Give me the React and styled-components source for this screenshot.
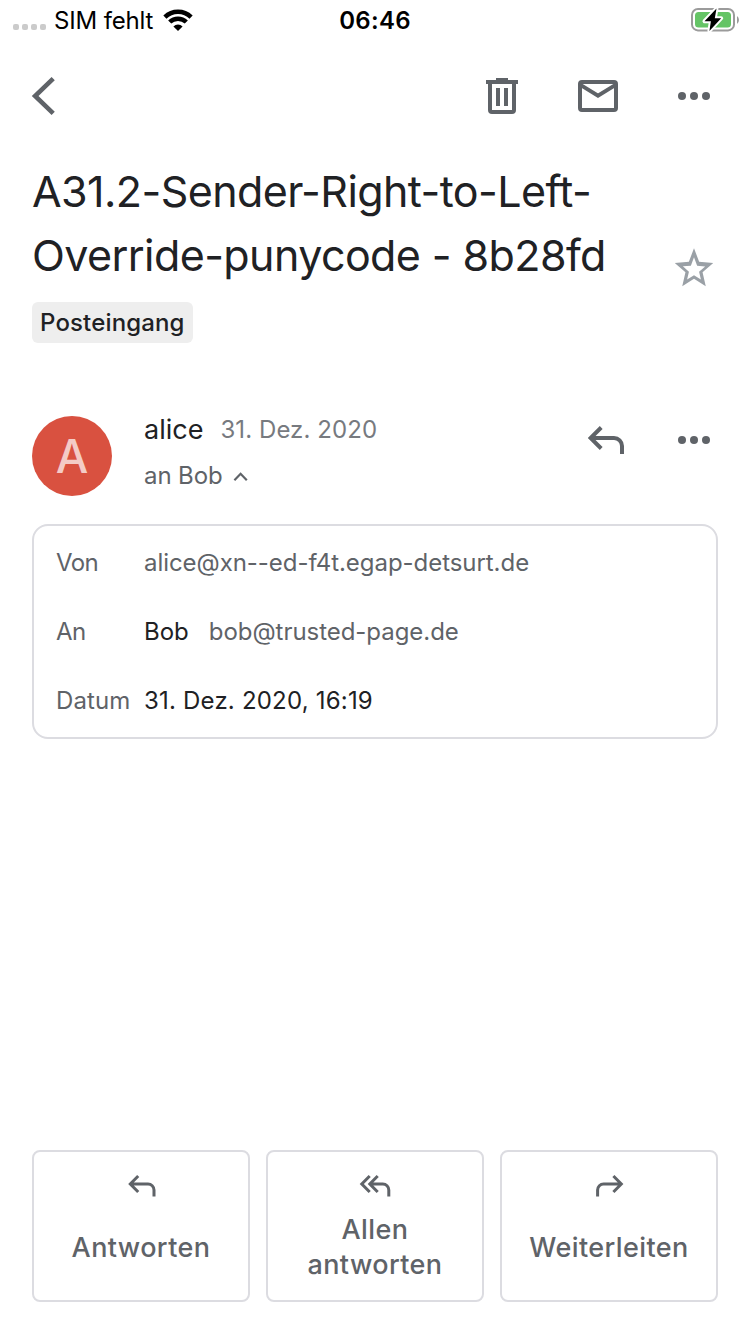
import React from 'react';
import styled, { createGlobalStyle } from 'styled-components';

const GlobalStyle = createGlobalStyle`
  *, *::before, *::after { box-sizing: border-box; }
  body {
    margin: 0;
    background: #fff;
    color: #202124;
    font-family: Inter, "Liberation Sans", sans-serif;
    font-size: 24px;
  }
  svg { display: block; flex: none; overflow: visible; }
`;

const Screen = styled.div`
  width: 750px;
  height: 1334px;
  display: flex;
  flex-direction: column;
  overflow: hidden;
`;

const StatusBar = styled.header`
  height: 40px;
  display: grid;
  grid-template-columns: 1fr auto 1fr;
  align-items: center;
  padding: 0 11px 0 13px;
  color: #000;
  line-height: 40px;
`;

const Carrier = styled.div`
  display: flex;
  align-items: center;
  letter-spacing: -0.16px;
`;

const CarrierName = styled.span`
  padding-top: 2px;
  line-height: 38px;
`;

const SignalDots = styled.div`
  display: flex;
  gap: 3px;
  margin: 14px 8px 0 0;
`;

const SignalDot = styled.i`
  width: 6px;
  height: 6px;
  border-radius: 2px;
  background: #cbcbcb;
`;

const WifiIcon = styled.svg`
  margin-left: 10px;
`;

const Clock = styled.time`
  padding: 2px 2px 0 0;
  line-height: 38px;
  font-weight: 600;
  letter-spacing: 0.3px;
`;

const BatteryIcon = styled.svg`
  justify-self: end;
`;

const Toolbar = styled.nav`
  height: 112px;
  display: flex;
  align-items: center;
  justify-content: space-between;
  padding: 0 32px;
`;

const IconButton = styled.button`
  width: 48px;
  height: 48px;
  display: flex;
  align-items: center;
  justify-content: ${(p) => p.$align || 'center'};
  padding: 0;
  border: 0;
  background: none;
  color: ${(p) => p.$color || '#5f6368'};
`;

const IconGroup = styled.div`
  display: flex;
  gap: ${(p) => p.$gap || '48px'};
`;

const Subject = styled.section`
  height: 135px;
  display: flex;
  justify-content: space-between;
  align-items: flex-end;
  padding: 0 32px 0 32px;
`;

const Title = styled.h1`
  width: 600px;
  margin: 0;
  font-size: 43px;
  font-weight: 400;
  line-height: 64px;
  letter-spacing: -0.58px;
`;

const StarButton = styled(IconButton)`
  margin-bottom: -5px;
`;

const Label = styled.span`
  align-self: flex-start;
  margin: 15px 0 0 32px;
  padding: 0 8px;
  height: 41px;
  border-radius: 6px;
  background: #eee;
  font-weight: 500;
  line-height: 41px;
  letter-spacing: 0.15px;
`;

const Sender = styled.section`
  display: flex;
  padding: 73px 32px 0;
  height: 181px;
`;

const Avatar = styled.div`
  width: 80px;
  height: 80px;
  border-radius: 50%;
  background: #d95140;
  color: #f4cbc6;
  font-size: 46px;
  font-weight: 500;
  line-height: 81px;
  text-align: center;
`;

const SenderText = styled.div`
  flex: 1;
  padding-left: 32px;
`;

const NameLine = styled.div`
  display: flex;
  align-items: baseline;
  gap: 17px;
  height: 36px;
  margin-top: -4px;
  line-height: 36px;
`;

const Name = styled.span`
  font-size: 27px;
`;

const Muted = styled.span`
  color: #5f6368;
  letter-spacing: ${(p) => p.$spacing || '0'};
`;

const SentDate = styled(Muted)`
  position: relative;
  top: -1px;
  color: #777a7f;
`;

const Recipient = styled.div`
  display: flex;
  align-items: center;
  gap: 11px;
  margin-top: 9px;
  line-height: 38px;
`;

const Details = styled.dl`
  margin: 0 32px;
  padding: 2px 22px;
  height: 215px;
  border: 2px solid #dcdce1;
  border-radius: 16px;
`;

const DetailRow = styled.div`
  display: grid;
  grid-template-columns: 88px 1fr;
  height: 69px;
  line-height: 69px;
`;

const Term = styled.dt`
  color: #5f6368;
  letter-spacing: ${(p) => p.$spacing || '0'};
`;

const Value = styled.dd`
  display: flex;
  gap: 20px;
  margin: 0;
  letter-spacing: ${(p) => p.$spacing || '0'};
`;

const Actions = styled.footer`
  display: grid;
  grid-template-columns: repeat(3, 1fr);
  gap: 16px;
  margin: auto 32px 32px;
`;

const ActionButton = styled.button`
  height: 152px;
  display: flex;
  flex-direction: column;
  align-items: center;
  padding: 23px 24px 0;
  border: 2px solid #dcdce1;
  border-radius: 8px;
  background: #fff;
  color: #5f6368;
  font: 500 27px/35px Inter, "Liberation Sans", sans-serif;
  letter-spacing: 0.4px;
`;

const ActionLabel = styled.span`
  height: 72px;
  margin-top: 14px;
  display: flex;
  align-items: center;
  text-align: center;
`;

const MoreIcon = () => (
  <svg width="32" height="8" viewBox="0 0 32 8" fill="currentColor">
    <circle cx="4" cy="4" r="4" />
    <circle cx="16" cy="4" r="4" />
    <circle cx="28" cy="4" r="4" />
  </svg>
);

const ReplyIcon = () => (
  <svg width="36" height="28" viewBox="0 0 36 28" fill="none" stroke="currentColor" strokeWidth="4">
    <path d="M13.2 1.5 2.6 12l10.6 10.5M2.6 12H26a8 8 0 0 1 8 8v8" />
  </svg>
);

const arrows = {
  reply: 'M10.2 1 2.3 9l7.9 8M2.3 9H20a6 6 0 0 1 6 6v6.5',
  replyAll: 'M9.7 1 1.8 9l7.9 8M17.7 1 9.8 9l7.9 8M9.8 9h13a6 6 0 0 1 6 6v6.5',
  forward: 'M17.4 1l7.9 8-7.9 8M25.3 9H7.6a6 6 0 0 0-6 6v6.5',
};

const ArrowIcon = ({ kind }) => {
  const width = kind === 'replyAll' ? 30 : 27;
  return (
    <svg width={width} height="22" viewBox={`0 0 ${width} 22`} fill="none" stroke="currentColor" strokeWidth="3">
      <path d={arrows[kind]} />
    </svg>
  );
};

const actions = [
  { kind: 'reply', label: 'Antworten' },
  { kind: 'replyAll', label: 'Allen antworten' },
  { kind: 'forward', label: 'Weiterleiten' },
];

export default function App() {
  return (
    <Screen>
      <GlobalStyle />
      <StatusBar>
        <Carrier>
          <SignalDots>
            <SignalDot />
            <SignalDot />
            <SignalDot />
            <SignalDot />
          </SignalDots>
          <CarrierName>SIM fehlt</CarrierName>
          <WifiIcon width="30" height="22" viewBox="0 0 30 22" fill="none" stroke="#000" strokeWidth="4.5">
            <path d="M1.9 8.1a18.800 18.800 0 0 1 26.200 0" />
            <path d="M6.700 13a12 12 0 0 1 16.600 0" />
            <path d="M15 22l-4.600-4.600a6.500 6.500 0 0 1 9.200 0z" fill="#000" stroke="none" />
          </WifiIcon>
        </Carrier>
        <Clock>06:46</Clock>
        <BatteryIcon width="48" height="24" viewBox="0 0 48 24">
          <rect x="1" y="1" width="42" height="21.4" rx="6" fill="none" stroke="#9b9b9b" strokeWidth="2" />
          <path d="M46 8v8q2-1.5 2-4t-2-4z" fill="#9b9b9b" />
          <rect x="4" y="4" width="36" height="15.4" rx="3.5" fill="#65c466" />
          <path
            d="M25.500.500 13.500 13.200h6.400L18.400 23 30.200 10.200h-6.400z"
            fill="#000"
            stroke="#fff"
            strokeWidth="4"
            strokeLinejoin="round"
            paintOrder="stroke"
          />
        </BatteryIcon>
      </StatusBar>

      <Toolbar>
        <IconButton $align="flex-start" aria-label="Zurück">
          <svg width="23" height="38" viewBox="0 0 23 38" fill="none" stroke="currentColor" strokeWidth="4.6">
            <path d="M21.2 1.6 3.1 19l18.100 17.400" />
          </svg>
        </IconButton>
        <IconGroup>
          <IconButton aria-label="Löschen">
            <svg width="32" height="36" viewBox="0 0 32 36" fill="none" stroke="currentColor" strokeWidth="4">
              <path d="M0 4h32" />
              <path d="M10 2h12" />
              <path d="M4 4v28q0 2 2 2h20q2 0 2-2V4" />
              <path d="M12 10v18M20 10v18" />
            </svg>
          </IconButton>
          <IconButton aria-label="Als ungelesen markieren">
            <svg width="40" height="32" viewBox="0 0 40 32" fill="none" stroke="currentColor" strokeWidth="4">
              <rect x="2" y="2" width="36" height="28" rx="2" />
              <path d="M2 4.600 20 15.600 38 4.600" />
            </svg>
          </IconButton>
          <IconButton aria-label="Mehr">
            <MoreIcon />
          </IconButton>
        </IconGroup>
      </Toolbar>

      <Subject>
        <Title>A31.2-Sender-Right-to-Left-Override-punycode - 8b28fd</Title>
        <StarButton $color="#9aa0a6" aria-label="Markieren">
          <svg width="44" height="44" viewBox="0 0 24 24" fill="currentColor">
            <path d="M22.5 9.24l-7.700-.66L12 1.2 9.200 8.590l-7.700.65 5.840 5.060L5.590 22 12 17.870 18.410 22l-1.740-7.700zM12 16l-3.760 2.270 1-4.280-3.320-2.880 4.380-.38L12 6.100l1.710 4.640 4.380.38-3.320 2.880 1 4.280z" />
          </svg>
        </StarButton>
      </Subject>
      <Label>Posteingang</Label>

      <Sender>
        <Avatar>A</Avatar>
        <SenderText>
          <NameLine>
            <Name>alice</Name>
            <SentDate $spacing="0.08px">31. Dez. 2020</SentDate>
          </NameLine>
          <Recipient>
            <Muted $spacing="-0.1px">an Bob</Muted>
            <svg width="14" height="9" viewBox="0 0 14 9" fill="none" stroke="#5f6368" strokeWidth="2.2">
              <path d="M.4 8.200 6.600 1.800l6.200 6.400" />
            </svg>
          </Recipient>
        </SenderText>
        <IconGroup $gap="40px">
          <IconButton aria-label="Antworten">
            <ReplyIcon />
          </IconButton>
          <IconButton aria-label="Mehr">
            <MoreIcon />
          </IconButton>
        </IconGroup>
      </Sender>

      <Details>
        <DetailRow>
          <Term $spacing="-0.6px">Von</Term>
          <Value>
            <Muted $spacing="-0.05px">alice@xn--ed-f4t.egap-detsurt.de</Muted>
          </Value>
        </DetailRow>
        <DetailRow>
          <Term $spacing="-0.6px">An</Term>
          <Value>
            <span>Bob</span>
            <Muted $spacing="-0.04px">bob@trusted-page.de</Muted>
          </Value>
        </DetailRow>
        <DetailRow>
          <Term $spacing="0.1px">Datum</Term>
          <Value $spacing="0.2px">31. Dez. 2020, 16:19</Value>
        </DetailRow>
      </Details>

      <Actions>
        {actions.map(({ kind, label }) => (
          <ActionButton key={kind}>
            <ArrowIcon kind={kind} />
            <ActionLabel>{label}</ActionLabel>
          </ActionButton>
        ))}
      </Actions>
    </Screen>
  );
}
